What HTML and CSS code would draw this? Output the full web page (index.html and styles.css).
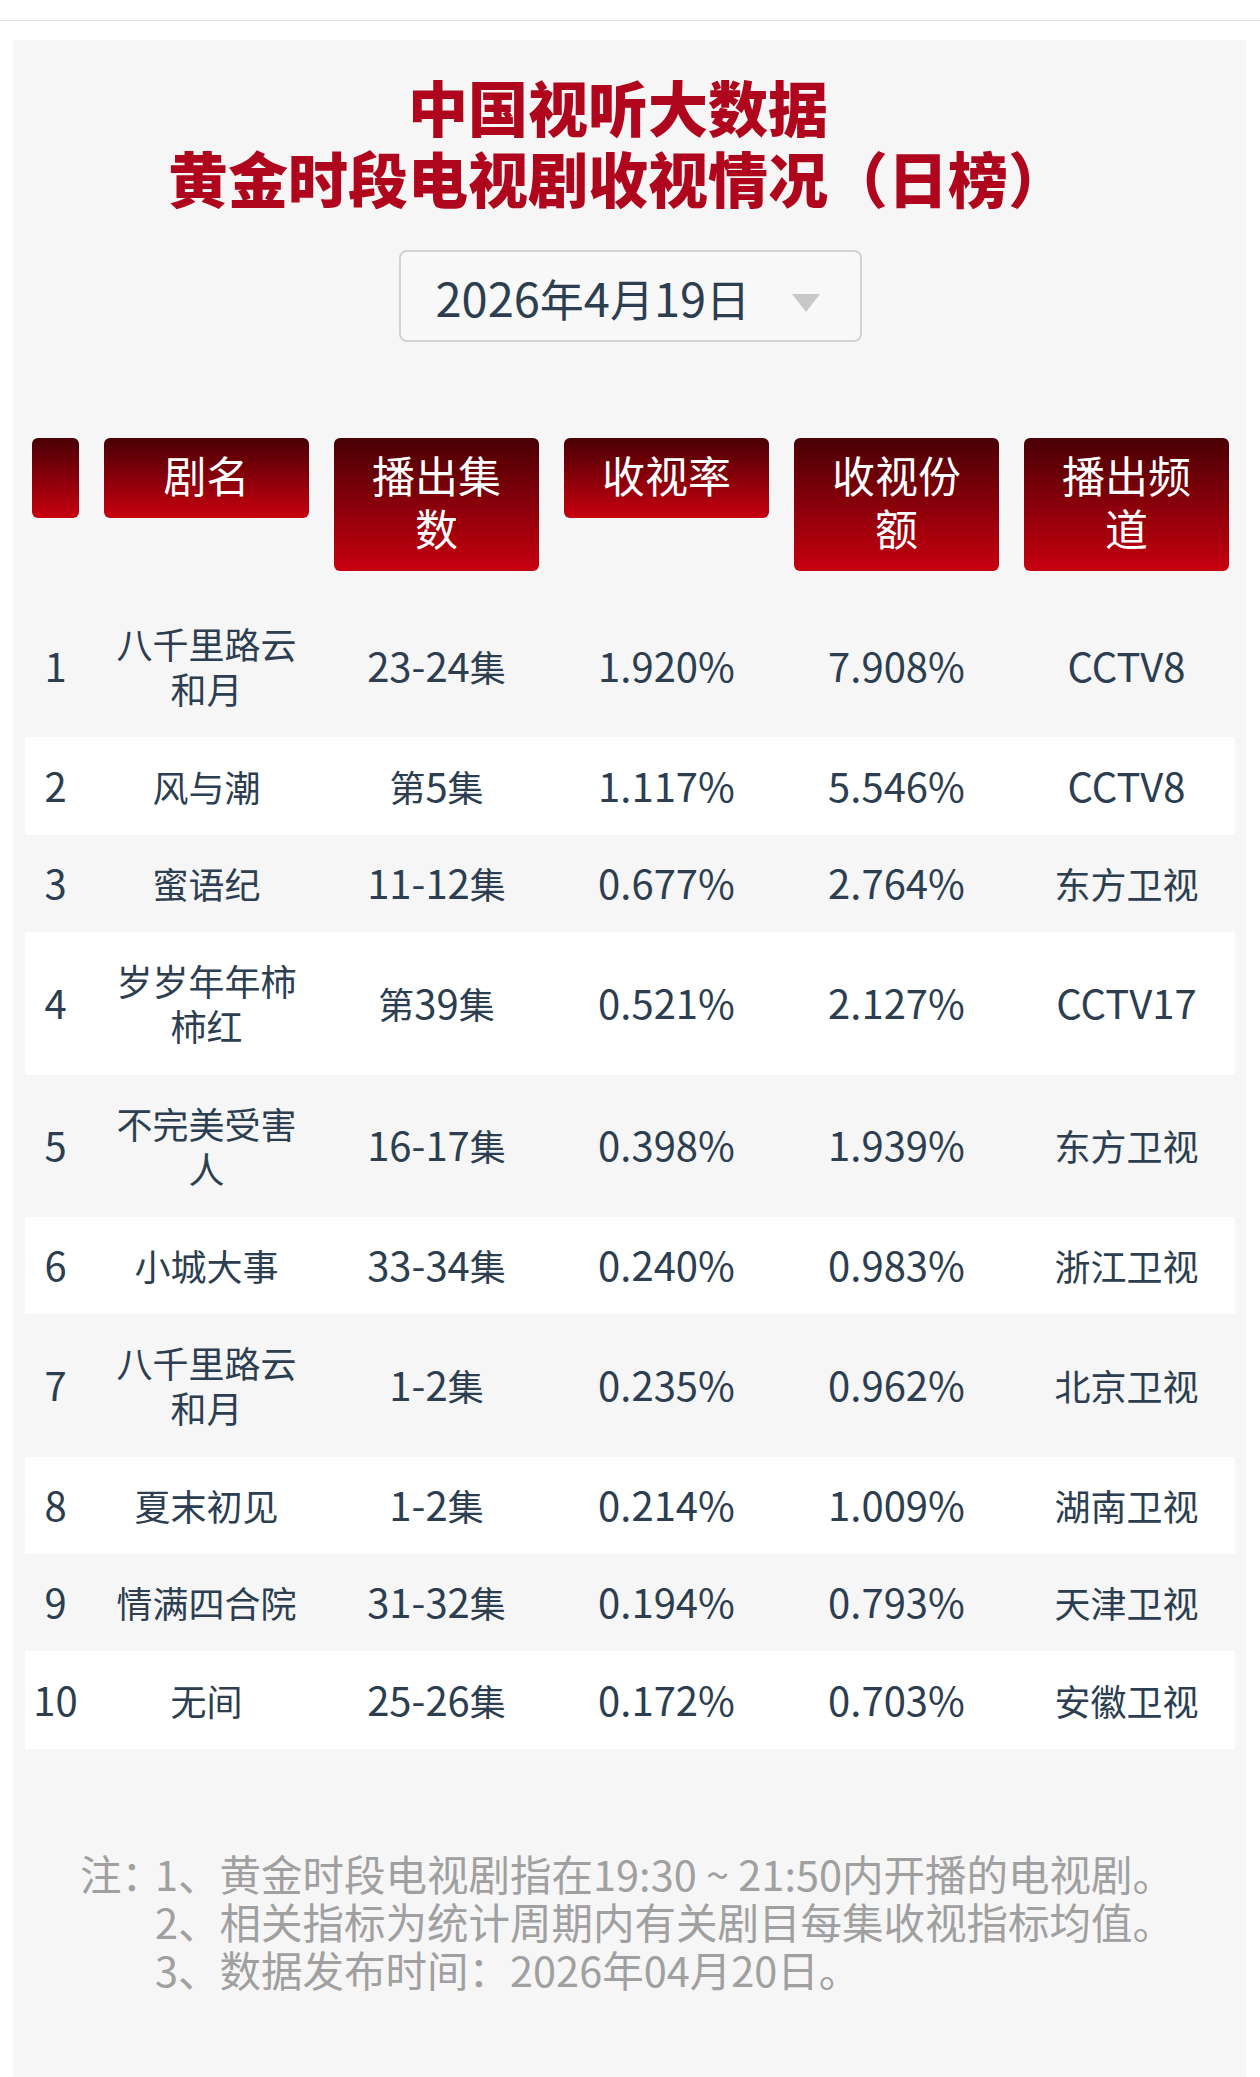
FILE: index.html
```html
<!DOCTYPE html>
<html lang="zh-CN">
<head>
<meta charset="utf-8">
<title>黄金时段电视剧收视情况（日榜）</title>
<link rel="stylesheet" href="styles.css">
</head>
<body>
<div class="topbar"></div>
<main class="panel">
  <h1 class="title">中国视听大数据<br>黄金时段电视剧收视情况（日榜）</h1>

  <div class="date-select">
    <span class="date-text"><span class="en">2026</span>年<span class="en">4</span>月<span class="en">19</span>日</span>
    <span class="caret"></span>
  </div>

  <section class="table">
    <div class="thead">
      <div class="th th-rank"></div>
      <div class="th">剧名</div>
      <div class="th">播出集数</div>
      <div class="th">收视率</div>
      <div class="th">收视份额</div>
      <div class="th">播出频道</div>
    </div>

    <div class="tbody">
      <div class="row"><div><span class="en">1</span></div><div>八千里路云和月</div><div><span class="en">23-24</span>集</div><div><span class="en">1.920%</span></div><div><span class="en">7.908%</span></div><div><span class="en">CCTV8</span></div></div>
      <div class="row"><div><span class="en">2</span></div><div>风与潮</div><div>第<span class="en">5</span>集</div><div><span class="en">1.117%</span></div><div><span class="en">5.546%</span></div><div><span class="en">CCTV8</span></div></div>
      <div class="row"><div><span class="en">3</span></div><div>蜜语纪</div><div><span class="en">11-12</span>集</div><div><span class="en">0.677%</span></div><div><span class="en">2.764%</span></div><div>东方卫视</div></div>
      <div class="row"><div><span class="en">4</span></div><div>岁岁年年柿柿红</div><div>第<span class="en">39</span>集</div><div><span class="en">0.521%</span></div><div><span class="en">2.127%</span></div><div><span class="en">CCTV17</span></div></div>
      <div class="row"><div><span class="en">5</span></div><div>不完美受害人</div><div><span class="en">16-17</span>集</div><div><span class="en">0.398%</span></div><div><span class="en">1.939%</span></div><div>东方卫视</div></div>
      <div class="row"><div><span class="en">6</span></div><div>小城大事</div><div><span class="en">33-34</span>集</div><div><span class="en">0.240%</span></div><div><span class="en">0.983%</span></div><div>浙江卫视</div></div>
      <div class="row"><div><span class="en">7</span></div><div>八千里路云和月</div><div><span class="en">1-2</span>集</div><div><span class="en">0.235%</span></div><div><span class="en">0.962%</span></div><div>北京卫视</div></div>
      <div class="row"><div><span class="en">8</span></div><div>夏末初见</div><div><span class="en">1-2</span>集</div><div><span class="en">0.214%</span></div><div><span class="en">1.009%</span></div><div>湖南卫视</div></div>
      <div class="row"><div><span class="en">9</span></div><div>情满四合院</div><div><span class="en">31-32</span>集</div><div><span class="en">0.194%</span></div><div><span class="en">0.793%</span></div><div>天津卫视</div></div>
      <div class="row"><div><span class="en">10</span></div><div>无间</div><div><span class="en">25-26</span>集</div><div><span class="en">0.172%</span></div><div><span class="en">0.703%</span></div><div>安徽卫视</div></div>
    </div>
  </section>

  <div class="notes">
    <span class="notes-label">注：</span>
    <ol class="notes-list">
      <li>1、黄金时段电视剧指在19:30 ~ 21:50内开播的电视剧。</li>
      <li>2、相关指标为统计周期内有关剧目每集收视指标均值。</li>
      <li>3、数据发布时间：2026年04月20日。</li>
    </ol>
  </div>
</main>
</body>
</html>
```

FILE: styles.css
```css
* { box-sizing: border-box; }

html, body {
  margin: 0;
  padding: 0;
  background: #ffffff;
}

body {
  width: 1260px;
  font-family: "Noto Sans CJK SC", "Noto Sans", sans-serif;
  color: #2c3e50;
}

.topbar {
  height: 21px;
  border-bottom: 1px solid #e0e0e0;
  margin-bottom: 19px;
}

.panel {
  display: block;
  margin: 0 14px 0 13px;
  min-height: 2037px;
  padding: 30px 11px 0 12px;
  background: #f6f6f6;
}

.title {
  margin: 0;
  padding-right: 24px;
  font-size: 60px;
  line-height: 71px;
  font-weight: 900;
  color: #b0061d;
  text-align: center;
}

.date-select {
  display: flex;
  align-items: center;
  width: 463px;
  height: 92px;
  margin: 38px auto 0;
  padding: 0 40px 0 35px;
  border: 2px solid #d2d2d2;
  border-radius: 8px;
  background: #f8f8f8;
}

.date-text {
  font-size: 44px;
  line-height: 1;
  color: #2c3e50;
}

.date-text .en {
  font-size: 47px;
}

.caret {
  margin-left: auto;
  margin-top: 14px;
  width: 0;
  height: 0;
  border-left: 14px solid transparent;
  border-right: 14px solid transparent;
  border-top: 18px solid #c8c8c8;
}

.table {
  margin-top: 96px;
}

.thead,
.row {
  display: grid;
  grid-template-columns: 47px repeat(5, 205px);
  column-gap: 25px;
}

.thead {
  padding: 0 7px;
  align-items: start;
}

.th {
  min-height: 80px;
  padding: 10px 19px 17px;
  border-radius: 6px;
  background: linear-gradient(to bottom, #480004, #c80010);
  color: #ffffff;
  font-size: 43px;
  line-height: 53px;
  text-align: center;
}

.th-rank {
  padding: 0;
  height: 80px;
}

.tbody {
  margin-top: 24px;
}

.row {
  align-items: center;
  padding: 26.2px 6px 26.2px 7px;
  font-size: 36px;
  line-height: 45px;
  text-align: center;
  color: #2c3e50;
}

.row:nth-child(even) {
  background: #ffffff;
}

.en {
  font-size: 40px;
  line-height: 1;
}

.notes {
  display: flex;
  margin-top: 100px;
  padding-left: 55px;
  font-size: 41.5px;
  line-height: 48px;
  color: #a0a0a0;
}

.notes-label {
  flex: none;
  width: 75px;
}

.notes-list {
  list-style: none;
  margin: 0;
  padding: 0;
}
```
